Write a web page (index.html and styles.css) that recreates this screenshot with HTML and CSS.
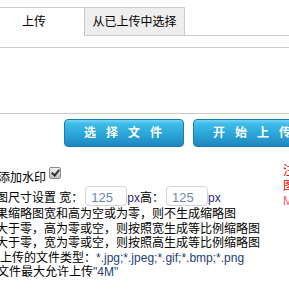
FILE: index.html
```html
<!DOCTYPE html>
<html lang="zh-CN">
<head>
<meta charset="utf-8">
<title>上传</title>
<link rel="stylesheet" href="styles.css">
</head>
<body>
<div class="tabs">
  <div class="tab tab-active">上传</div>
  <div class="tab tab-idle">从已上传中选择</div>
  <div class="tab-rest"></div>
</div>
<div class="queue"></div>
<div class="btns">
  <button class="btn" type="button">选择文件</button>
  <button class="btn" type="button">开始上传</button>
</div>
<div class="info">
  <div class="opts">
    <div class="row row-wm"><span class="txt">是否添加水印</span><input type="checkbox" class="chk" checked></div>
    <div class="row row-size"><span class="txt">缩略图尺寸设置 宽：</span><input class="num" type="text" value="125"><span class="txt unit">px</span><span class="txt">高：</span><input class="num" type="text" value="125"><span class="txt unit">px</span></div>
    <div class="line line-first">如果缩略图宽和高为空或为零，则不生成缩略图</div>
    <div class="line">宽大于零，高为零或空，则按照宽生成等比例缩略图</div>
    <div class="line">高大于零，宽为零或空，则按照高生成等比例缩略图</div>
    <div class="line line-types">允许上传的文件类型：<span class="types">*.jpg;*.jpeg;*.gif;*.bmp;*.png</span></div>
    <div class="line line-max">单文件最大允许上传<span class="types">"4M"</span></div>
  </div>
  <div class="notes">
    <div class="note">注意：</div>
    <div class="note">图片</div>
    <div class="note note-alt">M</div>
  </div>
</div>
</body>
</html>
```
FILE: styles.css
```css
html, body {
  overflow: hidden;
}
body {
  margin: 0;
  background: #fff;
  color: #000;
  font-family: "Liberation Sans", "Noto Sans CJK SC", sans-serif;
  font-size: 12px;
}

.tabs {
  display: flex;
  margin-top: 7px;
  margin-left: -17px;
  height: 29px;
}
.tab {
  box-sizing: border-box;
  width: 101px;
  height: 29px;
  text-align: center;
  line-height: 27px;
  padding-top: 1px;
  border-top: 1px solid #cccccc;
}
.tab-active {
  background: #fff;
  border-left: 1px solid #cccccc;
}
.tab-idle {
  background: #eeeeee;
  border: 1px solid #cccccc;
  line-height: 26px;
}
.tab-rest {
  flex: 1;
  border-bottom: 1px solid #cccccc;
}

.queue {
  margin-top: 11px;
  height: 65px;
  border-top: 1px solid #cccccc;
  border-bottom: 1px solid #cccccc;
}

.btns {
  display: flex;
  gap: 9px;
  margin-top: 5px;
  padding-left: 64px;
}
.btn {
  flex: none;
  box-sizing: border-box;
  width: 120px;
  height: 28px;
  margin: 0;
  padding: 0 0 0 8px;
  border: 1px solid #1f7cb0;
  border-radius: 4px;
  background: linear-gradient(to bottom, #74d5f4 0%, #3fbde8 14%, #2ba8da 50%, #1f87bf 100%);
  color: #fff;
  font-family: "Liberation Sans", "Noto Sans CJK SC", sans-serif;
  font-size: 12px;
  font-weight: bold;
  letter-spacing: 10px;
  line-height: 26px;
  text-align: center;
  white-space: nowrap;
}

.info {
  display: flex;
  margin-top: 17px;
}
.opts {
  flex: none;
  width: 299px;
  margin-left: -16px;
  padding-top: 3px;
  white-space: nowrap;
}
.row {
  display: flex;
}
.txt {
  line-height: 14.5px;
}
.row-wm {
  align-items: flex-start;
  margin-left: -10px;
}
.row-wm .txt {
  margin-top: 4px;
}
.chk {
  -webkit-appearance: none;
  appearance: none;
  position: relative;
  box-sizing: border-box;
  width: 12px;
  height: 12px;
  margin: 0 0 0 3px;
  border: 1px solid #8a8a8a;
  border-radius: 2px;
  background: linear-gradient(to bottom, #f2f2f2, #bdbdbd);
}
.chk:checked::after {
  content: "";
  position: absolute;
  left: 3px;
  top: 0px;
  width: 3px;
  height: 6px;
  border-right: 2px solid #333;
  border-bottom: 2px solid #333;
  transform: rotate(40deg);
}
.row-size {
  align-items: flex-end;
  margin-left: -12px;
  margin-top: 0;
}
.num {
  box-sizing: border-box;
  width: 42px;
  height: 20px;
  margin: 0 0 0 2px;
  padding: 4px 5px 0;
  border: 1px solid #d4d4d4;
  border-radius: 4px;
  color: #6d88b8;
  font-family: "Liberation Sans", sans-serif;
  font-size: 13px;
  background: #fff;
}
.unit {
  color: #2a2a8a;
}
.line {
  line-height: 14.5px;
}
.line-first {
  margin-top: 1.5px;
}
.line-types {
  margin-left: -8px;
}
.line-max {
  margin-left: 1px;
}
.types {
  color: #24407a;
}

.notes {
  flex: none;
  margin-top: 0;
  white-space: nowrap;
}
.note {
  color: #e60000;
  line-height: 15px;
}
.note-alt {
  color: #f0606e;
}
```
